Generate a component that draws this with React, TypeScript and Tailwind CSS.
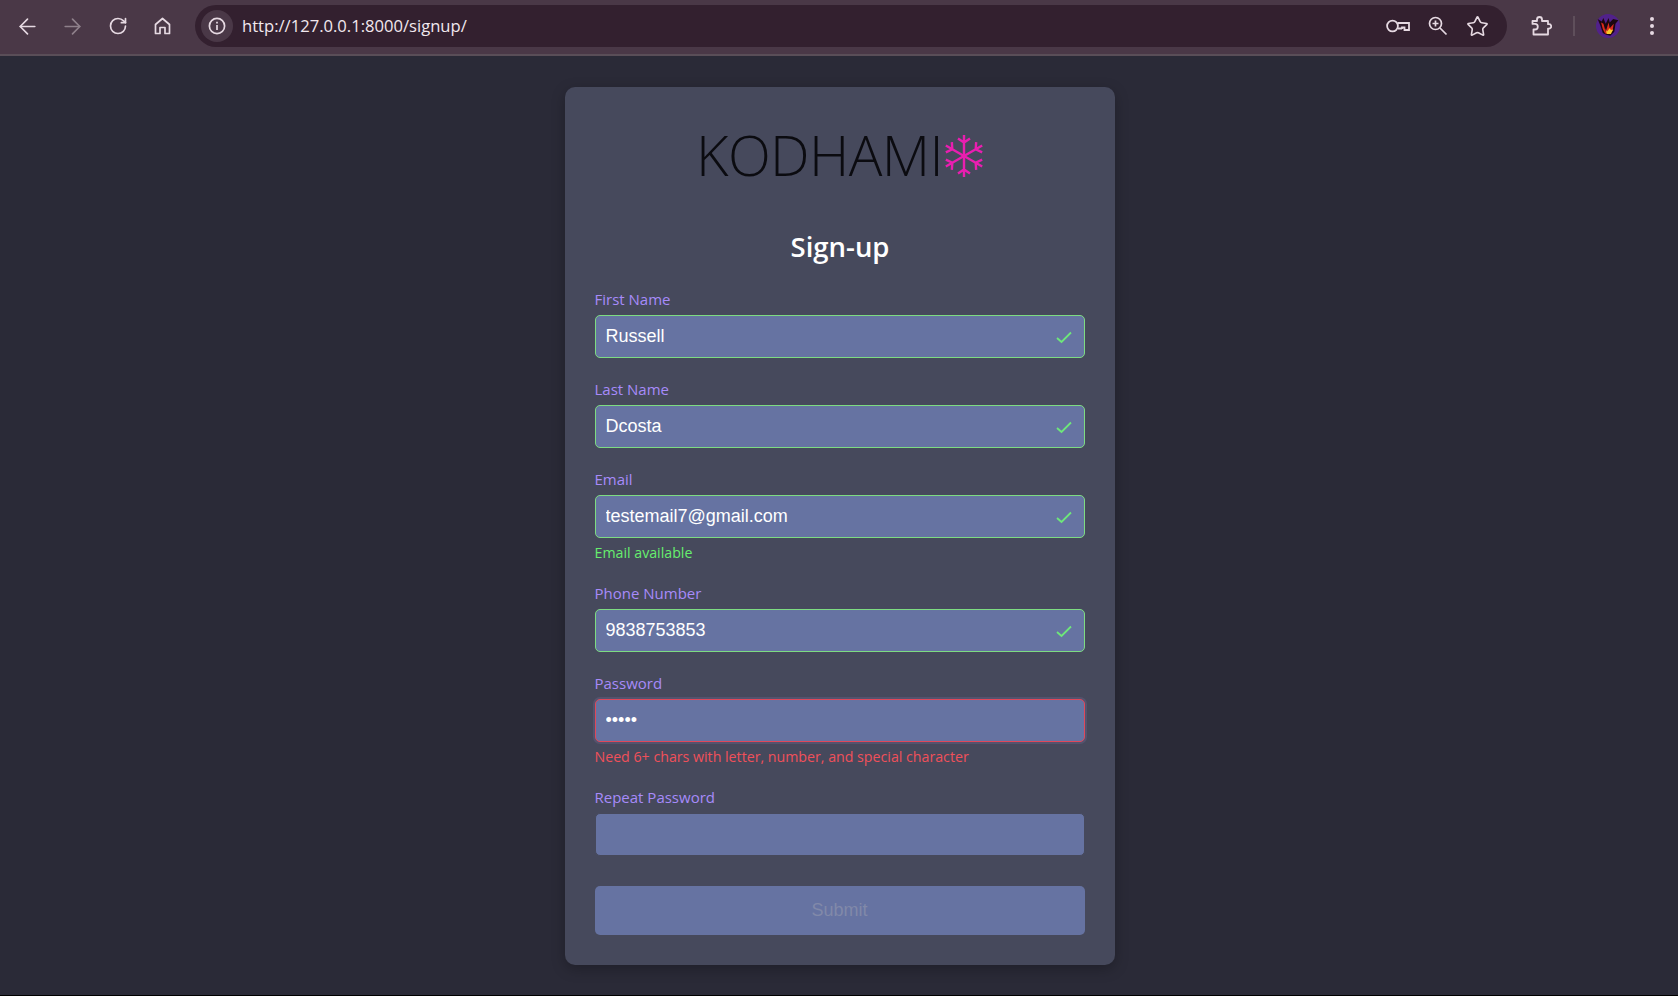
import type { ReactNode } from 'react'
import { ArrowLeft, ArrowRight, RotateCw, Star } from 'lucide-react'

type Field = {
  label: string
  value?: string
  type?: string
  state?: 'valid' | 'invalid'
  message?: string
}

const fields: Field[] = [
  { label: 'First Name', value: 'Russell', state: 'valid' },
  { label: 'Last Name', value: 'Dcosta', state: 'valid' },
  { label: 'Email', value: 'testemail7@gmail.com', state: 'valid', message: 'Email available' },
  { label: 'Phone Number', value: '9838753853', state: 'valid' },
  {
    label: 'Password',
    value: '12345',
    type: 'password',
    state: 'invalid',
    message: 'Need 6+ chars with letter, number, and special character',
  },
  { label: 'Repeat Password', type: 'password' },
]

function HomeIcon() {
  return (
    <svg width="17" height="18" viewBox="0 0 17 18" fill="none" stroke="currentColor" strokeWidth="1.7">
      <path d="M1.5 7.5L8.5 1.5L15.5 7.5V16.5H11V10.5H6V16.5H1.5Z" strokeLinejoin="round" />
    </svg>
  )
}

function InfoIcon() {
  return (
    <svg width="18" height="18" viewBox="0 0 18 18" fill="none" stroke="currentColor" strokeWidth="1.7">
      <circle cx="9" cy="9" r="7.6" />
      <path d="M9 8v5M9 4.8v1.8" />
    </svg>
  )
}

function KeyIcon() {
  return (
    <svg width="24" height="14" viewBox="0 0 24 14" fill="none" stroke="currentColor" strokeWidth="1.8">
      <circle cx="6.5" cy="7" r="5.4" />
      <path d="M11.5 4H23V11H18.5V8.5H16V10M12 9.5H16" />
    </svg>
  )
}

function ZoomLens() {
  return (
    <svg width="20" height="20" viewBox="0 0 20 20" fill="none" stroke="currentColor" strokeWidth="1.7">
      <circle cx="7.5" cy="7.5" r="6" />
      <path d="M7.5 4.5v6M4.5 7.5h6M12 12l6.5 6.5" />
    </svg>
  )
}

function ExtensionIcon() {
  return (
    <svg width="21" height="20" viewBox="0 0 21 20" fill="none" stroke="currentColor" strokeWidth="1.8" strokeLinejoin="round">
      <path d="M1.5 5H6V3.5a2.5 2.5 0 0 1 5 0V5H17V8.2H18a2.2 2.2 0 0 1 0 4.4H17V18.5H2.5V13.5H4a2.8 2.8 0 0 0 0-5.6H1.5Z" />
    </svg>
  )
}

function Avatar() {
  return (
    <svg width="24" height="24" viewBox="0 0 24 24">
      <circle cx="12" cy="12" r="12" fill="#51218a" />
      <g transform="translate(-1.8 -1.8) scale(1.15)">
        <path d="M3 6l3.500 2 1.500-3 2 5 2.500-5 1 4 3-3 4.500 1-2.500 3-1 7-3.500 3.500-3.500-1-3-1.500-2-6z" fill="#1c0710" />
        <path d="M6 9l2 1 2 7 2.500-8 1 5 3.500-4-1 6-3 3-3.500-.5-2-4z" fill="#dd2a1c" />
        <path d="M9.500 14l1.500 3 2.500-3 1 1.500 2-.5-2 4h-3.500z" fill="#f8c92c" />
      </g>
    </svg>
  )
}

function Snowflake() {
  const arm = 'M21 21V0M15 3.500L21 7.500L27 3.500'
  return (
    <svg width="42" height="42" viewBox="0 0 42 42" fill="none" stroke="#e91eb0" strokeWidth="2.400">
      {[0, 60, 120, 180, 240, 300].map((deg) => (
        <path key={deg} d={arm} transform={`rotate(${deg} 21 21)`} />
      ))}
    </svg>
  )
}

function NavButton({ children }: { children: ReactNode }) {
  return <div className="flex w-[45px] justify-center">{children}</div>
}

function BrowserBar() {
  return (
    <header className="flex h-[56px] items-center border-b-2 border-[#5a4e58] bg-[#4a3847] pb-[2px] pl-[5px] text-[#e6d9e2]">
      <div className="flex w-[190px] items-center">
        <NavButton>
          <ArrowLeft size={25} strokeWidth={1.6} />
        </NavButton>
        <NavButton>
          <ArrowRight size={25} strokeWidth={1.6} className="text-[#8f808b]" />
        </NavButton>
        <NavButton>
          <RotateCw size={20} strokeWidth={2} />
        </NavButton>
        <NavButton>
          <HomeIcon />
        </NavButton>
      </div>
      <div className="flex h-[42px] w-[1312px] items-center rounded-full bg-[#33202f] pl-[6px] pr-[18px]">
        <div className="flex h-[32px] w-[32px] items-center justify-center rounded-full bg-[#4a3847]">
          <InfoIcon />
        </div>
        <span className="ml-[9px] flex-1 font-['Open_Sans',sans-serif] text-[16.6px] text-[#f1e8ee]">
          http://127.0.0.1:8000/signup/
        </span>
        <div className="flex items-center gap-[18px]">
          <KeyIcon />
          <ZoomLens />
          <Star size={23} strokeWidth={1.7} />
        </div>
      </div>
      <div className="ml-[24px]">
        <ExtensionIcon />
      </div>
      <div className="ml-[21px] h-[20px] w-[2px] bg-[#5f4f5b]" />
      <div className="ml-[21px]">
        <Avatar />
      </div>
      <div className="ml-[30px] flex flex-col gap-[3px]">
        <span className="h-[4px] w-[4px] rounded-full bg-[#e6d9e2]" />
        <span className="h-[4px] w-[4px] rounded-full bg-[#e6d9e2]" />
        <span className="h-[4px] w-[4px] rounded-full bg-[#e6d9e2]" />
      </div>
    </header>
  )
}

function FormField({ label, value, type = 'text', state, message }: Field) {
  const border =
    state === 'valid'
      ? 'border-[#7ddc82]'
      : state === 'invalid'
        ? 'border-[#e0485a] shadow-[0_0_0_2px_#54536e]'
        : 'border-[#46495c]'
  return (
    <div className="mb-[23px]">
      <label className="mb-[3px] block h-[21px] text-[15px] leading-[17px] text-[#a78bfa]">{label}</label>
      <div className="relative">
        <input
          readOnly
          type={type}
          value={value ?? ''}
          className={`block h-[43px] w-full rounded-[5px] border bg-[#6673a2] px-[10px] font-['Liberation_Sans',sans-serif] text-[18px] text-white outline-none ${border}`}
        />
        {state === 'valid' && (
          <svg
            className="absolute right-[13px] top-[16px]"
            width="16"
            height="13"
            viewBox="0 0 16 13"
            fill="none"
            stroke="#6ee77a"
            strokeWidth="1.8"
          >
            <path d="M1 7l4.500 4L15 1.500" />
          </svg>
        )}
      </div>
      {message && (
        <p
          className={`mt-[4px] h-[20px] text-[14.2px] leading-[21px] ${
            state === 'valid' ? 'text-[#66ee6e]' : 'text-[#f0505a]'
          }`}
        >
          {message}
        </p>
      )}
    </div>
  )
}

export default function App() {
  return (
    <div className="min-h-[996px] border-b border-black bg-[#2a2a37] font-['Open_Sans',sans-serif]">
      <BrowserBar />
      <main className="flex justify-center pl-[1px] pt-[31px]">
        <div className="w-[550px] rounded-[10px] bg-[#46495c] px-[30px] pb-[30px] pt-[31px] shadow-[0_4px_14px_rgba(0,0,0,0.25)]">
          <div className="flex h-[76px] items-center justify-center pl-[2px]">
            <span className="mb-[4px] font-['Open_Sans',sans-serif] text-[56px] font-light leading-none tracking-[-0.6px] text-[#0b0b10]">
              KODHAMI
            </span>
            <Snowflake />
          </div>
          <h1 className="mb-[26px] mt-[35px] pl-[1px] text-center text-[27.5px] font-semibold leading-[36px] text-white">
            Sign-up
          </h1>
          {fields.map((f) => (
            <FormField key={f.label} {...f} />
          ))}
          <button
            disabled
            className="mt-[7px] h-[49px] w-full rounded-[5px] bg-[#6673a2] font-['Liberation_Sans',sans-serif] text-[18px] text-[#8189a9]"
          >
            Submit
          </button>
        </div>
      </main>
    </div>
  )
}
